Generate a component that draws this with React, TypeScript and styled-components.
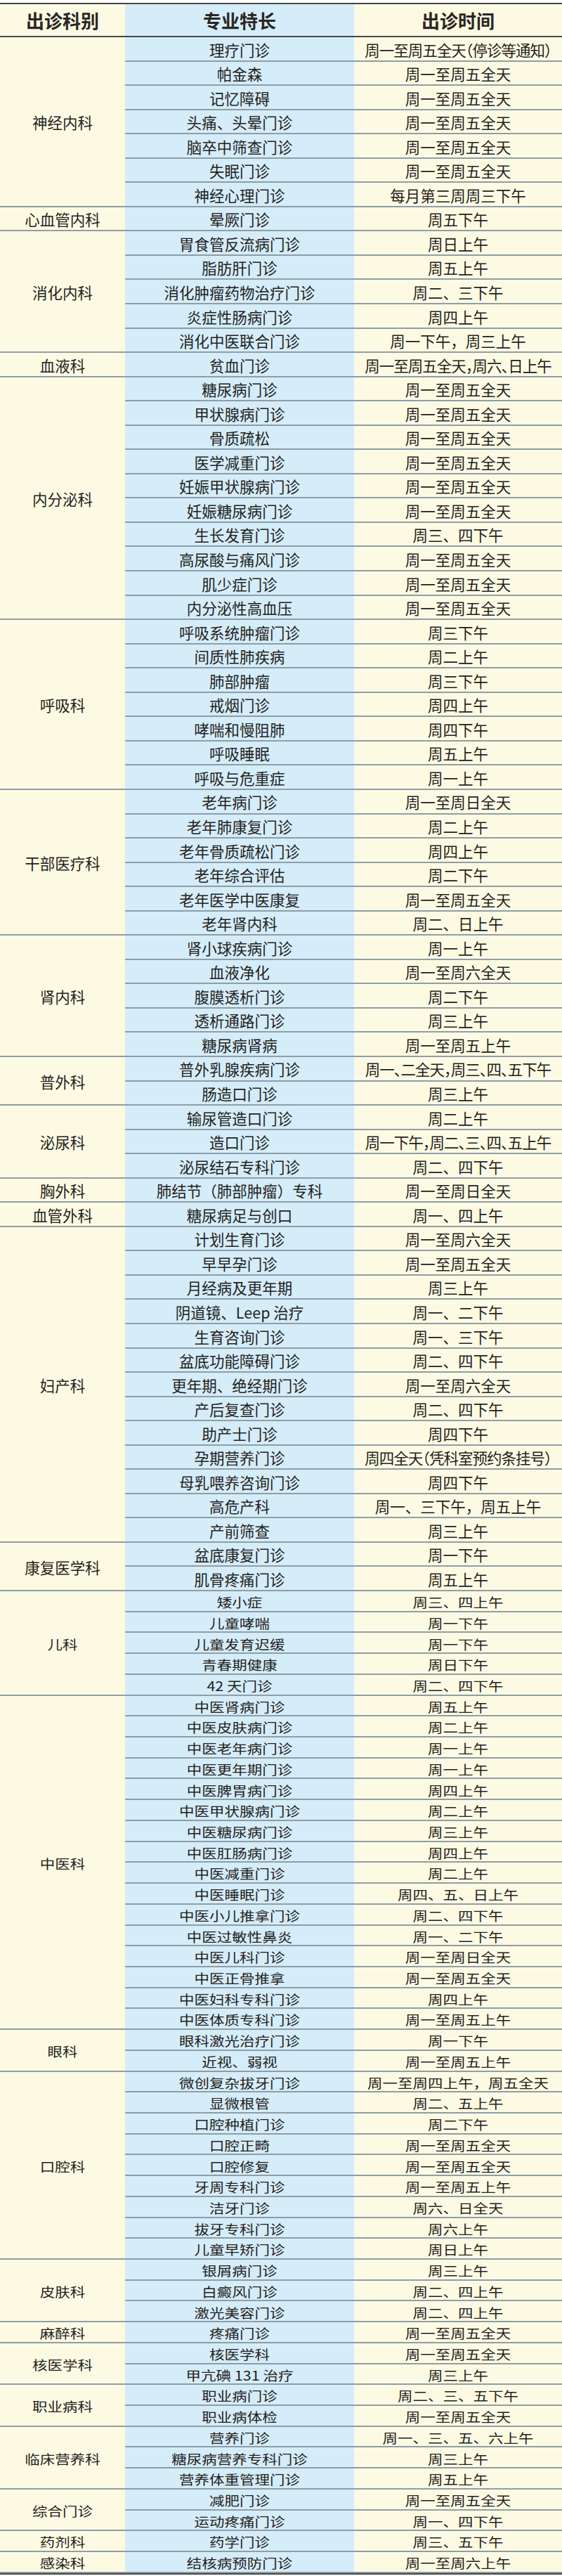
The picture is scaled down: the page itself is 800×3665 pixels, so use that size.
import React from 'react';
import styled, { createGlobalStyle, css } from 'styled-components';

type Clinic = { name: string; time: string; tight?: boolean };
type Department = { dept: string; compact?: boolean; clinics: Clinic[] };

const WEEKDAYS = '周一至周五全天';

const departments: Department[] = [
  {
    dept: '神经内科',
    clinics: [
      { name: '理疗门诊', time: '周一至周五全天（停诊等通知）', tight: true },
      { name: '帕金森', time: WEEKDAYS },
      { name: '记忆障碍', time: WEEKDAYS },
      { name: '头痛、头晕门诊', time: WEEKDAYS },
      { name: '脑卒中筛查门诊', time: WEEKDAYS },
      { name: '失眠门诊', time: WEEKDAYS },
      { name: '神经心理门诊', time: '每月第三周周三下午' },
    ],
  },
  { dept: '心血管内科', clinics: [{ name: '晕厥门诊', time: '周五下午' }] },
  {
    dept: '消化内科',
    clinics: [
      { name: '胃食管反流病门诊', time: '周日上午' },
      { name: '脂肪肝门诊', time: '周五上午' },
      { name: '消化肿瘤药物治疗门诊', time: '周二、三下午' },
      { name: '炎症性肠病门诊', time: '周四上午' },
      { name: '消化中医联合门诊', time: '周一下午，周三上午' },
    ],
  },
  { dept: '血液科', clinics: [{ name: '贫血门诊', time: '周一至周五全天，周六、日上午', tight: true }] },
  {
    dept: '内分泌科',
    clinics: [
      { name: '糖尿病门诊', time: WEEKDAYS },
      { name: '甲状腺病门诊', time: WEEKDAYS },
      { name: '骨质疏松', time: WEEKDAYS },
      { name: '医学减重门诊', time: WEEKDAYS },
      { name: '妊娠甲状腺病门诊', time: WEEKDAYS },
      { name: '妊娠糖尿病门诊', time: WEEKDAYS },
      { name: '生长发育门诊', time: '周三、四下午' },
      { name: '高尿酸与痛风门诊', time: WEEKDAYS },
      { name: '肌少症门诊', time: WEEKDAYS },
      { name: '内分泌性高血压', time: WEEKDAYS },
    ],
  },
  {
    dept: '呼吸科',
    clinics: [
      { name: '呼吸系统肿瘤门诊', time: '周三下午' },
      { name: '间质性肺疾病', time: '周二上午' },
      { name: '肺部肿瘤', time: '周三下午' },
      { name: '戒烟门诊', time: '周四上午' },
      { name: '哮喘和慢阻肺', time: '周四下午' },
      { name: '呼吸睡眠', time: '周五上午' },
      { name: '呼吸与危重症', time: '周一上午' },
    ],
  },
  {
    dept: '干部医疗科',
    clinics: [
      { name: '老年病门诊', time: '周一至周日全天' },
      { name: '老年肺康复门诊', time: '周二上午' },
      { name: '老年骨质疏松门诊', time: '周四上午' },
      { name: '老年综合评估', time: '周二下午' },
      { name: '老年医学中医康复', time: WEEKDAYS },
      { name: '老年肾内科', time: '周二、日上午' },
    ],
  },
  {
    dept: '肾内科',
    clinics: [
      { name: '肾小球疾病门诊', time: '周一上午' },
      { name: '血液净化', time: '周一至周六全天' },
      { name: '腹膜透析门诊', time: '周二下午' },
      { name: '透析通路门诊', time: '周三上午' },
      { name: '糖尿病肾病', time: '周一至周五上午' },
    ],
  },
  {
    dept: '普外科',
    clinics: [
      { name: '普外乳腺疾病门诊', time: '周一、二全天，周三、四、五下午', tight: true },
      { name: '肠造口门诊', time: '周三上午' },
    ],
  },
  {
    dept: '泌尿科',
    clinics: [
      { name: '输尿管造口门诊', time: '周二上午' },
      { name: '造口门诊', time: '周一下午，周二、三、四、五上午', tight: true },
      { name: '泌尿结石专科门诊', time: '周二、四下午' },
    ],
  },
  { dept: '胸外科', clinics: [{ name: '肺结节（肺部肿瘤）专科', time: '周一至周日全天' }] },
  { dept: '血管外科', clinics: [{ name: '糖尿病足与创口', time: '周一、四上午' }] },
  {
    dept: '妇产科',
    clinics: [
      { name: '计划生育门诊', time: '周一至周六全天' },
      { name: '早早孕门诊', time: WEEKDAYS },
      { name: '月经病及更年期', time: '周三上午' },
      { name: '阴道镜、Leep 治疗', time: '周一、二下午' },
      { name: '生育咨询门诊', time: '周一、三下午' },
      { name: '盆底功能障碍门诊', time: '周二、四下午' },
      { name: '更年期、绝经期门诊', time: '周一至周六全天' },
      { name: '产后复查门诊', time: '周二、四下午' },
      { name: '助产士门诊', time: '周四下午' },
      { name: '孕期营养门诊', time: '周四全天（凭科室预约条挂号）', tight: true },
      { name: '母乳喂养咨询门诊', time: '周四下午' },
      { name: '高危产科', time: '周一、三下午，周五上午' },
      { name: '产前筛查', time: '周三上午' },
    ],
  },
  {
    dept: '康复医学科',
    clinics: [
      { name: '盆底康复门诊', time: '周一下午' },
      { name: '肌骨疼痛门诊', time: '周五上午' },
    ],
  },
  {
    dept: '儿科',
    compact: true,
    clinics: [
      { name: '矮小症', time: '周三、四上午' },
      { name: '儿童哮喘', time: '周一下午' },
      { name: '儿童发育迟缓', time: '周一下午' },
      { name: '青春期健康', time: '周日下午' },
      { name: '42 天门诊', time: '周二、四下午' },
    ],
  },
  {
    dept: '中医科',
    compact: true,
    clinics: [
      { name: '中医肾病门诊', time: '周五上午' },
      { name: '中医皮肤病门诊', time: '周二上午' },
      { name: '中医老年病门诊', time: '周一上午' },
      { name: '中医更年期门诊', time: '周一上午' },
      { name: '中医脾胃病门诊', time: '周四上午' },
      { name: '中医甲状腺病门诊', time: '周二上午' },
      { name: '中医糖尿病门诊', time: '周三上午' },
      { name: '中医肛肠病门诊', time: '周四上午' },
      { name: '中医减重门诊', time: '周二上午' },
      { name: '中医睡眠门诊', time: '周四、五、日上午' },
      { name: '中医小儿推拿门诊', time: '周二、四下午' },
      { name: '中医过敏性鼻炎', time: '周一、二下午' },
      { name: '中医儿科门诊', time: '周一至周日全天' },
      { name: '中医正骨推拿', time: WEEKDAYS },
      { name: '中医妇科专科门诊', time: '周四上午' },
      { name: '中医体质专科门诊', time: '周一至周五上午' },
    ],
  },
  {
    dept: '眼科',
    compact: true,
    clinics: [
      { name: '眼科激光治疗门诊', time: '周一下午' },
      { name: '近视、弱视', time: '周一至周五上午' },
    ],
  },
  {
    dept: '口腔科',
    compact: true,
    clinics: [
      { name: '微创复杂拔牙门诊', time: '周一至周四上午，周五全天' },
      { name: '显微根管', time: '周二、五上午' },
      { name: '口腔种植门诊', time: '周二下午' },
      { name: '口腔正畸', time: WEEKDAYS },
      { name: '口腔修复', time: WEEKDAYS },
      { name: '牙周专科门诊', time: '周一至周五上午' },
      { name: '洁牙门诊', time: '周六、日全天' },
      { name: '拔牙专科门诊', time: '周六上午' },
      { name: '儿童早矫门诊', time: '周日上午' },
    ],
  },
  {
    dept: '皮肤科',
    compact: true,
    clinics: [
      { name: '银屑病门诊', time: '周三上午' },
      { name: '白癜风门诊', time: '周二、四上午' },
      { name: '激光美容门诊', time: '周二、四上午' },
    ],
  },
  { dept: '麻醉科', compact: true, clinics: [{ name: '疼痛门诊', time: WEEKDAYS }] },
  {
    dept: '核医学科',
    compact: true,
    clinics: [
      { name: '核医学科', time: WEEKDAYS },
      { name: '甲亢碘 131 治疗', time: '周三上午' },
    ],
  },
  {
    dept: '职业病科',
    compact: true,
    clinics: [
      { name: '职业病门诊', time: '周二、三、五下午' },
      { name: '职业病体检', time: WEEKDAYS },
    ],
  },
  {
    dept: '临床营养科',
    compact: true,
    clinics: [
      { name: '营养门诊', time: '周一、三、五、六上午' },
      { name: '糖尿病营养专科门诊', time: '周三上午' },
      { name: '营养体重管理门诊', time: '周五上午' },
    ],
  },
  {
    dept: '综合门诊',
    compact: true,
    clinics: [
      { name: '减肥门诊', time: WEEKDAYS },
      { name: '运动疼痛门诊', time: '周一、四下午' },
    ],
  },
  { dept: '药剂科', compact: true, clinics: [{ name: '药学门诊', time: '周三、五下午' }] },
  { dept: '感染科', compact: true, clinics: [{ name: '结核病预防门诊', time: '周一至周六上午' }] },
];

const colors = {
  cream: '#fdfae4',
  blue: '#d5ecf9',
  line: '#8e9ea5',
  rule: '#464646',
  text: '#231f1c',
};

type Tone = 'cream' | 'blue';

export default function App() {
  return (
    <>
      <GlobalStyle />
      <Page>
        <Table>
          <HeaderRow>
            <HeadCell $tone="cream">出诊科别</HeadCell>
            <HeadCell $tone="blue">专业特长</HeadCell>
            <HeadCell $tone="cream">出诊时间</HeadCell>
          </HeaderRow>
          {departments.map((d) => (
            <Group key={d.dept}>
              <DeptCell>
                <Label $compact={!!d.compact}>{d.dept}</Label>
              </DeptCell>
              <Clinics>
                {d.clinics.map((c) => (
                  <Row key={c.name} $compact={!!d.compact}>
                    <Cell $tone="blue">
                      <Label $compact={!!d.compact}>{c.name}</Label>
                    </Cell>
                    <Cell $tone="cream">
                      <Label $compact={!!d.compact} $tight={c.tight}>
                        {c.time}
                      </Label>
                    </Cell>
                  </Row>
                ))}
              </Clinics>
            </Group>
          ))}
        </Table>
      </Page>
    </>
  );
}

const GlobalStyle = createGlobalStyle`
  html, body {
    margin: 0;
    padding: 0;
    background: #ffffff;
  }
  body {
    font-family: "Noto Sans CJK SC", "Noto Sans", sans-serif;
    color: ${colors.text};
  }
`;

const Page = styled('div')`
  width: 800px;
  padding-top: 4px;
`;

const Table = styled('div')`
  border-top: 2px solid ${colors.rule};
  border-bottom: 2px solid ${colors.rule};
`;

const HeaderRow = styled('div')`
  display: grid;
  grid-template-columns: 178px 326px 296px;
  height: 47px;
  box-sizing: border-box;
  border-bottom: 2px solid ${colors.rule};
`;

const HeadCell = styled('div')<{ $tone: Tone }>`
  display: flex;
  align-items: center;
  justify-content: center;
  background: ${({ $tone }) => colors[$tone]};
  font-size: 26px;
  font-weight: 700;
  line-height: 1;
  color: #2a2623;
`;

const Group = styled('div')`
  display: grid;
  grid-template-columns: 178px 622px;
`;

const DeptCell = styled('div')`
  display: flex;
  align-items: center;
  justify-content: center;
  background: ${colors.cream};
  border-bottom: 2px solid ${colors.line};
  font-size: 21.5px;
`;

const Clinics = styled('div')`
  display: flex;
  flex-direction: column;
`;

const Row = styled('div')<{ $compact: boolean }>`
  display: grid;
  grid-template-columns: 326px 296px;
  height: ${({ $compact }) => ($compact ? '29.72px' : '34.55px')};
  box-sizing: border-box;
  border-bottom: 2px solid ${colors.line};
`;

const Cell = styled('div')<{ $tone: Tone }>`
  display: flex;
  align-items: center;
  justify-content: center;
  background: ${({ $tone }) => colors[$tone]};
  font-size: 21.5px;
  overflow: visible;
`;

const Label = styled('span')<{ $compact: boolean; $tight?: boolean }>`
  display: inline-block;
  white-space: nowrap;
  line-height: 1;
  padding-top: 2px;
  ${({ $compact }) =>
    $compact &&
    css`
      transform: scaleY(0.86);
    `}
  ${({ $tight }) =>
    $tight &&
    css`
      font-feature-settings: 'halt';
      letter-spacing: -1px;
    `}
`;
